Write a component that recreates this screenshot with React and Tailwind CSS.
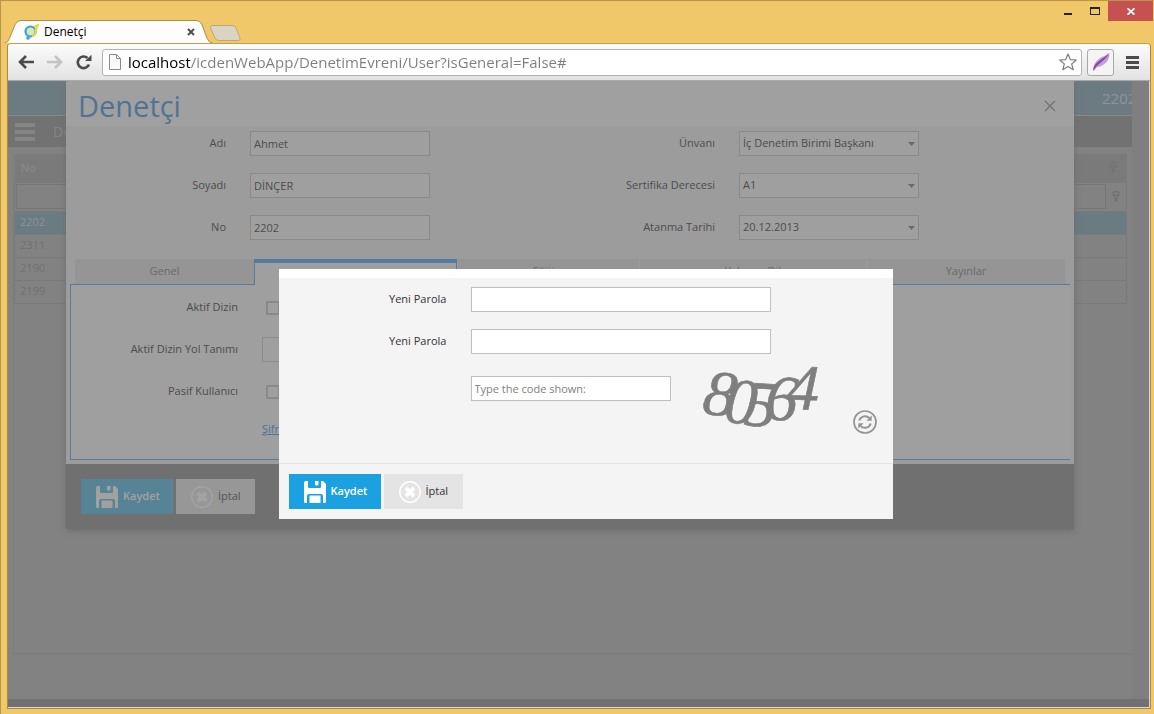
import React, { useState } from 'react';
import clsx from 'clsx';

const ROWS = ['2202', '2311', '2190', '2199'];

const SaveIcon = () => (
  <svg className="h-[22px] w-[22px] shrink-0" viewBox="0 0 22 22" fill="currentColor" aria-hidden="true">
    <path d="M1.500 0H4v6a1 1 0 0 0 1 1h11a1 1 0 0 0 1-1V0h2l3 3v17.500a1.500 1.500 0 0 1-1.500 1.500H19v-7a2 2 0 0 0-2-2H5a2 2 0 0 0-2 2v7H1.500A1.500 1.500 0 0 1 0 20.500v-19A1.500 1.500 0 0 1 1.500 0z" />
    <path d="M11 0h3.500v3.500a1 1 0 0 1-1 1H12a1 1 0 0 1-1-1zM5.500 14.500h11V22h-11z" />
  </svg>
);

const CancelIcon = () => (
  <svg className="h-[22px] w-[22px] shrink-0" viewBox="0 0 22 22" fill="none" stroke="currentColor" aria-hidden="true">
    <circle cx="11" cy="11" r="10.200" strokeWidth="1.400" />
    <path d="M7 7l8 8M15 7l-8 8" strokeWidth="4" />
  </svg>
);

const FunnelIcon = () => (
  <svg className="h-3 w-2" viewBox="0 0 8 12" fill="none" stroke="currentColor" aria-hidden="true">
    <ellipse cx="4" cy="2.500" rx="3.300" ry="1.900" />
    <path d="M1 4c1 2 2.200 1.500 2.200 3v4M7 4C6 6 4.800 5.500 4.800 7v3.500" />
  </svg>
);

function ActionButtons({ dimmed }) {
  return (
    <div className="flex gap-[3px]">
      <button
        type="button"
        className={clsx(
          'flex h-[35px] w-[92px] items-center gap-[5px] pl-[15px]',
          dimmed ? 'bg-[#578397] text-[#a1a1a1]' : 'bg-[#1ba1e2] text-white'
        )}
      >
        <SaveIcon />
        <span className="font-semibold">Kaydet</span>
      </button>
      <button
        type="button"
        className={clsx('flex h-[35px] w-[79px] items-center gap-[5px] pl-[15px]', dimmed ? 'bg-[#979797]' : 'bg-[#e4e4e4]')}
      >
        <span className={dimmed ? 'text-[#a3a3a3]' : 'text-white'}>
          <CancelIcon />
        </span>
        <span className={dimmed ? 'text-[#555]' : 'text-[#333]'}>İptal</span>
      </button>
    </div>
  );
}

function TextField({ id, label, value }) {
  return (
    <div className="flex h-[25px] items-center gap-6">
      <label htmlFor={id} className="w-[156px] shrink-0 text-right">
        {label}
      </label>
      <input
        id={id}
        type="text"
        defaultValue={value}
        className="h-[25px] w-[180px] border border-[#8a8a8a] bg-[#9f9f9f] px-[3px] outline-none"
      />
    </div>
  );
}

function SelectField({ id, label, value }) {
  return (
    <div className="flex h-[25px] items-center gap-6">
      <label htmlFor={id} className="w-[161px] shrink-0 text-right">
        {label}
      </label>
      <div className="relative">
        <select
          id={id}
          defaultValue={value}
          className="block h-[25px] w-[180px] appearance-none border border-[#8a8a8a] bg-[#9f9f9f] pr-5 pl-[3px] outline-none"
        >
          <option>{value}</option>
        </select>
        <svg className="pointer-events-none absolute top-[11px] right-1 h-1 w-[7px]" viewBox="0 0 7 4" fill="#6a6a6a">
          <path d="M0 0h7L3.500 4z" />
        </svg>
      </div>
    </div>
  );
}

function TitleBar() {
  return (
    <div className="flex h-[42px] items-end">
      <div className="relative ml-[2px] flex h-[23px] w-[210px] items-center pr-[18px] pl-[20px]">
        <svg className="absolute inset-0 h-full w-full" viewBox="0 0 210 24" fill="#fdfdfd" stroke="#a68a48" preserveAspectRatio="none">
          <path d="M-1 24.500C5 24 5 22 6.500 19L12 5Q14 .5 18 .5H192Q197 .5 199 5L204 19Q206 24 210 24.500" />
        </svg>
        <svg className="relative h-4 w-4" viewBox="0 0 16 16" fill="none">
          <circle cx="7.500" cy="7.500" r="5" stroke="#35a0dc" strokeWidth="2.200" fill="#d5e9b0" />
          <path d="M9 12.200a5 5 0 0 0 3.500-6L15 1l-4 2" stroke="#e3dd3c" strokeWidth="2" />
          <circle cx="5" cy="14" r="1.800" fill="#35a0dc" />
        </svg>
        <span className="relative ml-[5px] text-[12px] text-black">Denetçi</span>
        <button type="button" aria-label="Sekmeyi kapat" className="relative ml-auto">
          <svg className="h-2 w-2" viewBox="0 0 8 8" stroke="#4d4d4d" strokeWidth="2">
            <path d="M1 1l6 6M7 1L1 7" />
          </svg>
        </button>
      </div>
      <button type="button" aria-label="Yeni sekme" className="mb-[2px] -ml-1">
        <svg className="h-4 w-8" viewBox="0 0 32 16" fill="#d9d4c4" stroke="#bfa877">
          <path d="M3 .5h20q3 0 4 2.500l4 10q.8 2.500-2 2.500H10q-3 0-4-2.500L1.500 3Q.8.5 3 .5z" />
        </svg>
      </button>
      <div className="mr-px ml-auto flex self-start">
        <button type="button" aria-label="Simge durumuna küçült" className="flex h-5 w-[27px] items-center justify-center">
          <svg className="h-[10px] w-2" viewBox="0 0 8 10" fill="#222">
            <path d="M0 7h8v2H0z" />
          </svg>
        </button>
        <button type="button" aria-label="Ekranı kapla" className="flex h-5 w-[27px] items-center justify-center">
          <svg className="h-2 w-[10px]" viewBox="0 0 10 8" fill="#222">
            <path fillRule="evenodd" d="M0 0h10v8H0zM1 2v5h8V2z" />
          </svg>
        </button>
        <button type="button" aria-label="Kapat" className="flex h-5 w-[45px] items-center justify-center bg-[#c75050]">
          <svg className="h-[7px] w-2" viewBox="0 0 8 7" stroke="#fff" strokeWidth="1.800">
            <path d="M.5.3l7 6.400M7.500.3l-7 6.400" />
          </svg>
        </button>
      </div>
    </div>
  );
}

function Toolbar() {
  return (
    <div className="flex h-[37px] items-center rounded-t-[3px] border-b border-[#a9a9a9] bg-linear-to-b from-[#fcfcfc] to-[#e2e2e2] pr-[11px] pl-[10px]">
      <button type="button" aria-label="Geri">
        <svg className="h-[14px] w-4" viewBox="0 0 16 14" fill="none" stroke="#4b4b4b" strokeWidth="2.600">
          <path d="M2 7h14M8 1L2 7l6 6" />
        </svg>
      </button>
      <button type="button" aria-label="İleri" className="ml-[13px]">
        <svg className="h-[14px] w-4" viewBox="0 0 16 14" fill="none" stroke="#c4c4c4" strokeWidth="2.600">
          <path d="M0 7h14M8 1l6 6-6 6" />
        </svg>
      </button>
      <button type="button" aria-label="Yenile" className="ml-[13px]">
        <svg className="h-4 w-4" viewBox="0 0 16 16" fill="none" stroke="#4b4b4b" strokeWidth="2.600">
          <path d="M13 10.500A5.800 5.800 0 1 1 11.500 4" />
          <path d="M15.500.8V7H9z" fill="#4b4b4b" stroke="none" />
        </svg>
      </button>
      <div className="relative ml-[10px] flex h-[27px] flex-1 items-center rounded-[3px] border border-[#b3b3b3] bg-white pr-1 pl-[6px]">
        <svg className="h-4 w-3 shrink-0" viewBox="0 0 12 16" fill="#fafafa" stroke="#8b8b8b">
          <path d="M.5.5h7l4 4v11H.5zM7.500.5v4h4" />
        </svg>
        <div className="relative ml-[7px] flex-1">
          <input
            type="text"
            aria-label="Adres"
            defaultValue="localhost/icdenWebApp/DenetimEvreni/User?isGeneral=False#"
            className="block h-5 w-full bg-linear-to-r from-black from-[62px] to-[#7d7d7d] to-[62px] bg-clip-text text-[15px] text-transparent outline-none"
          />
        </div>
        <button type="button" aria-label="Sık kullanılanlara ekle">
          <svg className="h-[18px] w-[18px]" viewBox="0 0 18 18" fill="#fff" stroke="#7d7d7d" strokeWidth="1.200" strokeLinejoin="round">
            <path d="M9 1l2.300 5.600 6 .4-4.600 3.900 1.500 5.900L9 13.600l-5.200 3.200 1.500-5.900L.7 7l6-.4z" />
          </svg>
        </button>
      </div>
      <button
        type="button"
        aria-label="Uzantı"
        className="ml-[5px] flex h-[27px] w-[27px] items-center justify-center rounded-[3px] border border-[#a9a9a9] bg-[#f4f4f4]"
      >
        <svg className="h-[18px] w-[18px]" viewBox="0 0 18 18">
          <path d="M17 0c1 4-1 9-6 12-3 2-5 2-6 2l-3 4-1-.5C1 12 4 8 8 5c3-2 6-2 9-5z" fill="#c3a0d8" />
          <path d="M17 0C14 7 8 9 4 14l-3 3.500C2 11 6 9 9 6.500c3-2 6-4 8-6.500z" fill="#8146a8" />
        </svg>
      </button>
      <button type="button" aria-label="Menü" className="ml-3">
        <svg className="h-[13px] w-[13px]" viewBox="0 0 13 13" fill="#4b4b4b">
          <path d="M0 0h13v3H0zM0 5h13v3H0zM0 10h13v3H0z" />
        </svg>
      </button>
    </div>
  );
}

/* User list that stays behind the dialogs */
function UserList() {
  return (
    <div className="mr-[17px] flex flex-1 flex-col bg-[#828282]">
      <div className="flex h-[35px] items-center justify-end border-b border-[#8b8b8b] bg-[#6c7b82]">
        <span className="w-[30px] overflow-hidden text-[15px] text-[#8f9498]">2202</span>
      </div>
      <div className="flex h-[31px] items-center gap-[18px] bg-[#727272] pl-[7px] text-[#858585]">
        <svg className="h-[18px] w-5" viewBox="0 0 20 18" fill="currentColor">
          <path d="M0 0h20v4H0zM0 7h20v4H0zM0 14h20v4H0z" />
        </svg>
        <span className="text-[14px]">Denetçi</span>
      </div>
      <div className="mt-[7px] ml-[5px] h-[501px] border-b-2 border-l border-[#7d7d7d] pr-[5px]">
        <table className="w-full border-collapse text-[#6c7378]">
          <thead>
            <tr className="h-[28px] bg-[#7a7a7a] text-[#878787]">
              <th className="w-[60px] pl-[6px] text-left font-semibold">No</th>
              <th className="pr-[10px]">
                <span className="flex justify-end text-[#727272]">
                  <FunnelIcon />
                </span>
              </th>
            </tr>
            <tr className="h-[29px]">
              <td colSpan={2} className="border border-[#7a7a7a] pl-px">
                <div className="flex items-center text-[#6c6c6c]">
                  <input type="text" aria-label="No filtresi" className="h-[25px] flex-1 border border-[#767676] outline-none" />
                  <span className="px-[6px]">
                    <FunnelIcon />
                  </span>
                </div>
              </td>
            </tr>
          </thead>
          <tbody>
            {ROWS.map((no, index) => (
              <tr key={no} className={clsx('h-[23px]', index === 0 && 'bg-[#6a7b82] text-[#8a9297]')}>
                <td className="border-y border-l border-[#7a7a7a] pl-[5px]">{no}</td>
                <td className="border-y border-r border-[#7a7a7a]" />
              </tr>
            ))}
          </tbody>
        </table>
      </div>
      <div className="mt-auto -mr-[17px] h-2 bg-[#717171]" />
    </div>
  );
}

function UserDialog() {
  return (
    <section className="absolute top-0 right-[75px] left-[58px] bg-[#9c9c9c] text-[#4c4c4c] shadow-[0_2px_6px_#6e6e6e]">
      <header className="flex h-[45px] items-center justify-between bg-[#a0a0a0] pt-1 pr-[18px] pl-3">
        <h1 className="text-[29px] text-[#507391]">Denetçi</h1>
        <button type="button" aria-label="Pencereyi kapat">
          <svg className="h-3 w-3" viewBox="0 0 12 12" stroke="#747474" strokeWidth="1.400">
            <path d="M1 1l10 10M11 1L1 11" />
          </svg>
        </button>
      </header>
      <div className="px-1 pt-[5px] pb-1">
        <div className="flex justify-between pr-[151px]">
          <div className="flex flex-col gap-[17px]">
            <TextField id="adi" label="Adı" value="Ahmet" />
            <TextField id="soyadi" label="Soyadı" value="DİNÇER" />
            <TextField id="no" label="No" value="2202" />
          </div>
          <div className="flex flex-col gap-[17px]">
            <SelectField id="unvani" label="Ünvanı" value="İç Denetim Birimi Başkanı" />
            <SelectField id="sertifika" label="Sertifika Derecesi" value="A1" />
            <SelectField id="atanma" label="Atanma Tarihi" value="20.12.2013" />
          </div>
        </div>

        {/* Tabs */}
        <div role="tablist" className="mt-[19px] flex h-[25px] pr-[5px] pl-[5px] text-[#696969]">
          <button type="button" role="tab" className="w-[179px] bg-[#959595]">
            Genel
          </button>
          <button
            type="button"
            role="tab"
            aria-selected="true"
            aria-label="Kullanıcı"
            className="relative h-[26px] w-[203px] border-x border-t-4 border-[#557a9e] bg-[#9f9f9f]"
          />
          <button type="button" role="tab" className="ml-px w-[181px] bg-[#959595]">
            Eğitim
          </button>
          <button type="button" role="tab" className="ml-px w-[226px] bg-[#959595]">
            Yabancı Dil
          </button>
          <button type="button" role="tab" className="ml-px flex-1 bg-[#959595]">
            Yayınlar
          </button>
        </div>
        <div className="flex h-[176px] flex-col gap-[17px] border border-r-0 border-[#557a9e] bg-[#9f9f9f] pt-[10px]">
          <div className="flex h-[25px] items-center">
            <label htmlFor="aktif" className="w-[167px] text-right">
              Aktif Dizin
            </label>
            <input id="aktif" type="checkbox" className="ml-7 h-[14px] w-[14px] appearance-none border-2 border-[#898989]" />
          </div>
          <div className="flex h-[25px] items-center">
            <label htmlFor="yol" className="w-[167px] text-right">
              Aktif Dizin Yol Tanımı
            </label>
            <input id="yol" type="text" className="ml-6 h-[25px] w-[180px] border border-[#8a8a8a] outline-none" />
          </div>
          <div className="flex h-[25px] items-center">
            <label htmlFor="pasif" className="w-[167px] text-right">
              Pasif Kullanıcı
            </label>
            <input id="pasif" type="checkbox" className="ml-7 h-[14px] w-[14px] appearance-none border-2 border-[#898989]" />
          </div>
          <a href="#sifre" className="ml-[191px] text-[#4d7394] underline">
            Şifre Değiştir
          </a>
        </div>
      </div>
      <footer className="bg-[#707070] px-[15px] py-[15px]">
        <ActionButtons dimmed />
      </footer>
    </section>
  );
}

function PasswordDialog() {
  const [code, setCode] = useState('');

  return (
    <div className="absolute inset-x-0 top-[188px] flex justify-center pl-[14px]">
      <section className="w-[614px] border-t-[9px] border-white bg-[#f4f4f4] text-[#333]">
        <div className="flex h-[185px] flex-col gap-[17px] pt-[9px]">
          <div className="flex items-center gap-6">
            <label htmlFor="parola" className="w-[168px] text-right">
              Yeni Parola
            </label>
            <input id="parola" type="password" className="h-[25px] w-[300px] border border-[#c0c0c0] bg-white px-[3px] outline-none" />
          </div>
          <div className="flex items-center gap-6">
            <label htmlFor="parola2" className="w-[168px] text-right">
              Yeni Parola
            </label>
            <input id="parola2" type="password" className="h-[25px] w-[300px] border border-[#c0c0c0] bg-white px-[3px] outline-none" />
          </div>
          <div className="flex items-start pl-48">
            <input
              type="text"
              aria-label="Type the code shown:"
              placeholder="Type the code shown:"
              value={code}
              onChange={(e) => setCode(e.target.value)}
              className="mt-[5px] h-[25px] w-[200px] border border-[#c0c0c0] bg-white px-[3px] outline-none placeholder:text-[#808080]"
            />
            <svg
              className="-mt-3 ml-[27px] h-[76px] w-[128px] overflow-visible"
              viewBox="0 0 128 76"
              fill="#7f7f7f"
              stroke="#7f7f7f"
              strokeWidth=".6"
              fontFamily="Liberation Serif"
              fontStyle="italic"
              fontSize="65"
            >
              <text x="3 25 45 66 88" y="54 63 66 60 50" rotate="8 5 4 4 2">
                80564
              </text>
            </svg>
            <button type="button" aria-label="Kodu yenile" className="mt-[39px] ml-[27px]">
              <svg className="h-6 w-6" viewBox="0 0 24 24" fill="none" stroke="#949494">
                <circle cx="12" cy="12" r="11" strokeWidth="1.700" />
                <path d="M6.300 10.500a6 6 0 0 1 10.200-2.300M17.700 13.500a6 6 0 0 1-10.200 2.300" strokeWidth="2" />
                <path d="M18.700 5.500v5.300h-5.300zM5.300 18.500v-5.300h5.300z" fill="#949494" stroke="none" />
              </svg>
            </button>
          </div>
        </div>
        <footer className="border-t border-[#e2e2e2] p-[10px]">
          <ActionButtons />
        </footer>
      </section>
    </div>
  );
}

function App() {
  return (
    <div className="flex min-h-screen flex-col border-t border-l border-[#b8974a] bg-[#f0c869] font-['Open_Sans',sans-serif] text-[11px]">
      <TitleBar />
      <div className="mr-[3px] mb-[5px] ml-[6px] flex flex-1 flex-col rounded-t-[4px] border border-[#a68a48] border-t-[#c0a050]">
        <Toolbar />
        <main className="relative flex flex-1 flex-col overflow-hidden border-r border-b border-[#d8d8d8] bg-[#7f7f7f]">
          <UserList />
          <UserDialog />
          <PasswordDialog />
        </main>
      </div>
    </div>
  );
}

export default App;
